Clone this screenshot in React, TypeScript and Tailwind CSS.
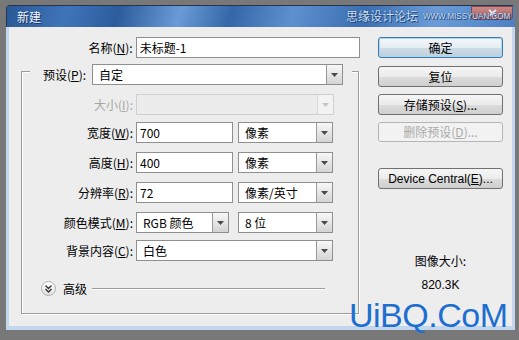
import React from "react";

const font = "font-['Noto_Sans_CJK_SC','Noto_Sans',sans-serif]";

function Arrow({ disabled }: { disabled?: boolean }) {
  return (
    <div
      className={`h-full w-[16px] flex items-center justify-center border-l ${
        disabled
          ? "border-[#d8d8d8] bg-[#f3f3f3]"
          : "border-[#9a9a9a] bg-[linear-gradient(#f8f8f8,#d4d4d4)]"
      }`}
    >
      <svg width="7" height="4" viewBox="0 0 7 4">
        <path d="M0 0h7L3.5 4z" fill={disabled ? "#c4c4c4" : "#4a4a4a"} />
      </svg>
    </div>
  );
}

function Select({ value, w, disabled }: { value: string; w: string; disabled?: boolean }) {
  return (
    <div
      className={`${w} h-[21px] flex items-stretch border ${
        disabled ? "border-[#cfcfcf] bg-[#ececec]" : "border-[#8f8f8f] bg-white"
      }`}
    >
      <div className="flex-1 pl-[6px] flex items-center text-[12px] leading-none text-black">{value}</div>
      <Arrow disabled={disabled} />
    </div>
  );
}

function Input({ value, w }: { value: string; w: string }) {
  return (
    <div className={`${w} h-[21px] border border-[#8f8f8f] bg-white pl-[3px] flex items-center text-[12px] leading-none`}>
      {value}
    </div>
  );
}

function Label({ children, disabled }: { children: React.ReactNode; disabled?: boolean }) {
  return (
    <div
      className={`w-[111px] text-right text-[12px] leading-none whitespace-nowrap ${
        disabled ? "text-[#a6a6a6]" : "text-black"
      }`}
    >
      {children}
    </div>
  );
}

function Btn({
  children,
  mt,
  primary,
  disabled,
  h = "h-[21px]",
}: {
  children: React.ReactNode;
  mt: string;
  primary?: boolean;
  disabled?: boolean;
  h?: string;
}) {
  return (
    <div
      className={`${mt} ${h} w-[125px] rounded-[3px] border flex items-center justify-center text-[12px] leading-none whitespace-nowrap ${
        primary
          ? "border-[#3d7bad] shadow-[inset_0_0_0_1px_#a9d6f5] bg-[linear-gradient(#f4f8fb_0%,#e4ecf2_50%,#cfdce6_51%,#bcd0dd_100%)] text-black"
          : disabled
          ? "border-[#b6b6b6] bg-[#f2f2f2] text-[#a9a9a9]"
          : "border-[#707070] bg-[linear-gradient(#f6f6f6_0%,#ebebeb_50%,#dcdcdc_51%,#cfcfcf_100%)] text-black"
      }`}
    >
      {children}
    </div>
  );
}

export default function App() {
  return (
    <div className={`relative w-[519px] h-[340px] overflow-hidden bg-[#787878] pt-[5px] pl-[6px] ${font}`}>
      <div className="w-[509px] h-[325px] flex flex-col rounded-tl-[4px] rounded-tr-[4px] overflow-hidden">
        {/* title bar */}
        <div className="relative h-[22px] flex items-center border-t border-l border-[#243553] bg-[linear-gradient(105deg,#2b5895_0%,#3f75b8_12%,#2c5c9c_22%,#6a9bd6_34%,#3567a8_44%,#5e90cf_56%,#3b6fb1_70%,#6b9cd8_84%,#4b80c2_100%)]">
          <div className="absolute left-[464px] top-0 w-[42px] h-[14px] rounded-b-[3px] border border-[#8a3a2e] bg-[linear-gradient(#e68b7c,#c4513f)] flex items-center justify-center opacity-80">
            <svg width="9" height="8" viewBox="0 0 9 8">
              <path d="M1 1l7 6M8 1L1 7" stroke="#fff" strokeWidth="1.8" />
            </svg>
          </div>
          <span className="ml-[10px] text-[12px] leading-none text-[#eef4ff] [text-shadow:1px_1px_0_#1c3560]">新建</span>
          <span className="absolute left-[339px] top-[4px] text-[12px] leading-none text-[#cfe2fa] [text-shadow:0_0_1px_#0e2c5c,1px_1px_0_#214a86]">
            思缘设计论坛
          </span>
          <span className="absolute left-[416px] top-[6px] text-[8px] leading-none scale-y-[1.2] origin-top-left text-[#d6e6fb] font-['Liberation_Sans',sans-serif] [text-shadow:0_0_1px_#0e2c5c,1px_1px_0_#214a86]">
            WWW.MISSYUAN.COM
          </span>
        </div>

        {/* body */}
        <div className="flex-1 flex border-x-[3px] border-b-[4px] border-[#c2d6ee] bg-[#ededed]">
          {/* left column */}
          <div className="w-[351px] flex flex-col">
            <div className="mt-[10px] flex items-center">
              <div className="w-[124px] text-right text-[12px] leading-none">
                名称(<u>N</u>):
              </div>
              <Input value="未标题-1" w="ml-[3px] w-[225px]" />
            </div>

            <div className="mt-[13px] ml-[12px] w-[338px] h-[243px] border border-[#9c9c9c] shadow-[1px_1px_0_#ffffff,inset_1px_1px_0_#ffffff] flex flex-col">
              <div className="mt-[-8px] ml-[8px] w-[322px] h-[21px] bg-[#ededed] pl-[13px] pr-[9px] flex items-center">
                <div className="w-[44px] text-[12px] leading-none whitespace-nowrap">
                  预设(<u>P</u>):
                </div>
                <Select value="自定" w="ml-[5px] w-[251px]" />
              </div>

              <div className="mt-[9px] flex items-center">
                <Label disabled>
                  大小(<u>I</u>):
                </Label>
                <Select value="" w="ml-[3px] w-[198px]" disabled />
              </div>

              <div className="mt-[7px] flex items-center">
                <Label>
                  宽度(<u>W</u>):
                </Label>
                <Input value="700" w="ml-[3px] w-[97px]" />
                <Select value="像素" w="ml-[5px] w-[95px]" />
              </div>

              <div className="mt-[9px] flex items-center">
                <Label>
                  高度(<u>H</u>):
                </Label>
                <Input value="400" w="ml-[3px] w-[97px]" />
                <Select value="像素" w="ml-[5px] w-[95px]" />
              </div>

              <div className="mt-[9px] flex items-center">
                <Label>
                  分辨率(<u>R</u>):
                </Label>
                <Input value="72" w="ml-[3px] w-[97px]" />
                <Select value="像素/英寸" w="ml-[5px] w-[95px]" />
              </div>

              <div className="mt-[9px] flex items-center">
                <Label>
                  颜色模式(<u>M</u>):
                </Label>
                <Select value="RGB 颜色" w="ml-[3px] w-[93px]" />
                <Select value="8 位" w="ml-[9px] w-[95px]" />
              </div>

              <div className="mt-[7px] flex items-center">
                <Label>
                  背景内容(<u>C</u>):
                </Label>
                <Select value="白色" w="ml-[3px] w-[197px]" />
              </div>

              <div className="mt-[20px] flex items-center">
                <div className="ml-[19px] w-[15px] h-[15px] rounded-full border border-[#b0b0b0] bg-[linear-gradient(#ffffff,#e2e2e2)] flex items-center justify-center">
                  <svg width="7" height="8" viewBox="0 0 7 8">
                    <path d="M0.5 0.5L3.5 3.5L6.5 0.5M0.5 4L3.5 7L6.5 4" stroke="#333" strokeWidth="1.3" fill="none" />
                  </svg>
                </div>
                <span className="ml-[7px] text-[12px] leading-none">高级</span>
                <div className="ml-[5px] w-[233px] h-px bg-[#9c9c9c] shadow-[0_1px_0_#ffffff]" />
              </div>
            </div>
          </div>

          {/* right column */}
          <div className="ml-[18px] flex flex-col">
            <Btn mt="mt-[10px]" primary>
              确定
            </Btn>
            <Btn mt="mt-[8px]">复位</Btn>
            <Btn mt="mt-[7px]">
              存储预设(<u>S</u>)...
            </Btn>
            <Btn mt="mt-[7px]" h="h-[20px]" disabled>
              删除预设(<u>D</u>)...
            </Btn>
            <Btn mt="mt-[26px]">
              <span className="font-['Liberation_Sans',sans-serif]">
                Device Central(<u>E</u>)...
              </span>
            </Btn>
            <div className="mt-[65px] w-[125px] text-center text-[12px] leading-[14px]">图像大小:</div>
            <div className="mt-[10px] w-[125px] text-center text-[12px] leading-[14px] font-['Liberation_Sans',sans-serif]">
              820.3K
            </div>
          </div>
        </div>
      </div>

      <div className="absolute left-[349px] top-[298px] text-[34px] leading-none text-[#1c6fd1] font-['Liberation_Sans',sans-serif] tracking-[-0.5px]">
        UiBQ.CoM
      </div>
    </div>
  );
}
